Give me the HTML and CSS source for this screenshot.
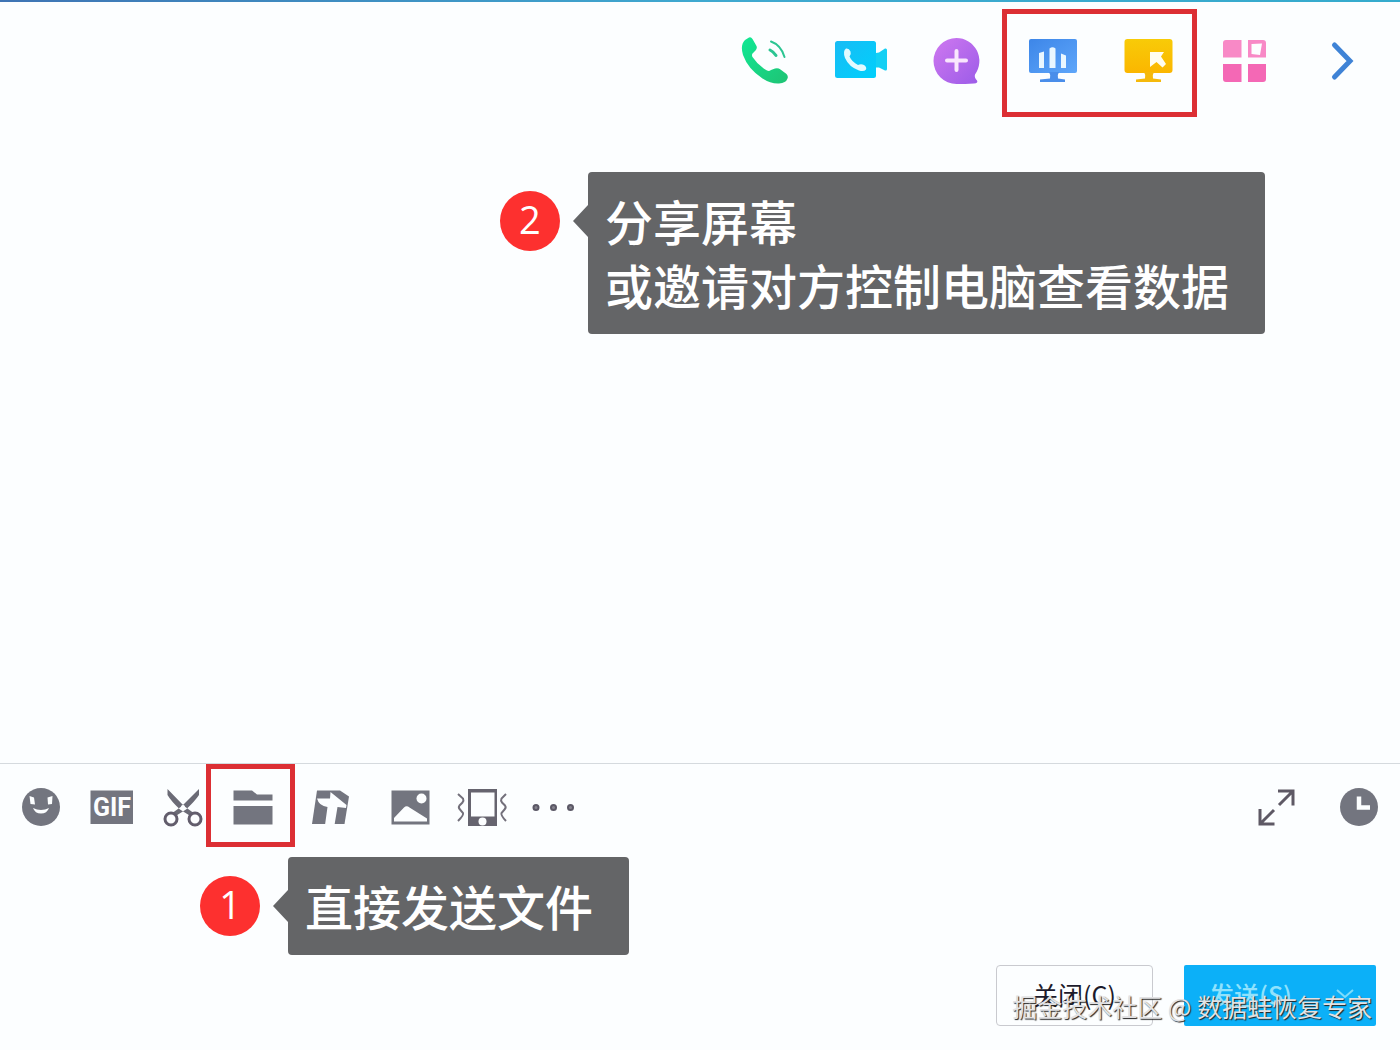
FILE: index.html
```html
<!DOCTYPE html>
<html lang="zh-CN">
<head>
    <meta charset="UTF-8">
    <meta name="viewport" content="width=device-width, initial-scale=1.0">
    <title>聊天窗口</title>
    <link rel="stylesheet" href="styles.css">
</head>
<body>
    <div class="chat">
        <!-- 顶部工具栏 -->
        <header class="topbar">
            <button type="button" class="action" aria-label="语音通话">
                <svg viewBox="0 0 60 60">
                    <defs>
                        <linearGradient id="green" x1="0" y1="0" x2="1" y2="1">
                            <stop offset="0" stop-color="#10e894"/>
                            <stop offset="1" stop-color="#1fc374"/>
                        </linearGradient>
                    </defs>
                    <path fill="url(#green)" d="M14 6.500Q16 5.500 17.500 8L21.500 15Q22.500 17 20.500 19.500L17.500 22.500Q16.500 24 17.500 26Q23 34.500 32 39.500Q34 40.500 36 39L40 37.500Q43 36.500 45.500 38.500L51.500 43Q53.500 45 52.500 47.500Q51 52 44 52.500Q36 53 27.500 47.500Q13 38 8 24Q5 14 10 9Z"/>
                    <path fill="none" stroke="#2cc592" stroke-width="2" stroke-linecap="round" d="M36 10.500Q46 14 49.500 26"/>
                    <path fill="none" stroke="#2cc592" stroke-width="3" stroke-linecap="round" d="M35 19Q39 21 41 24.500"/>
                </svg>
            </button>
            <button type="button" class="action" aria-label="视频通话">
                <svg viewBox="0 0 60 60">
                    <defs>
                        <linearGradient id="cyan" x1="0" y1="0" x2="1" y2="1">
                            <stop offset="0" stop-color="#18bcf5"/>
                            <stop offset="1" stop-color="#00d0fc"/>
                        </linearGradient>
                    </defs>
                    <rect x="4" y="10" width="41" height="37" rx="2.500" fill="url(#cyan)"/>
                    <path fill="#14d0f4" d="M45 22L48 21.500L54 17.500Q56 17 56 19V38Q56 40 54 39.500L48 36.500H45Z"/>
                    <path fill="#e2faff" d="M15 17.500Q18 17 19.500 20.500Q20.500 23 18.500 25.500Q21 31 27 34Q30 32.500 33 34Q36 36 35 38.500Q33 41 28 39.500Q18 36 14 27Q11.500 20 15 17.500Z"/>
                </svg>
            </button>
            <button type="button" class="action" aria-label="发起多人聊天">
                <svg viewBox="0 0 60 60">
                    <defs>
                        <linearGradient id="purple" x1="0" y1="0" x2="1" y2="1">
                            <stop offset="0" stop-color="#cf78f0"/>
                            <stop offset="1" stop-color="#9c5ce8"/>
                        </linearGradient>
                    </defs>
                    <path fill="url(#purple)" d="M29.500 7A23 23 0 0 1 48 43.500Q47 46.500 50 49.500Q51.500 52 47 52.500Q38 53 29.500 53A23 23 0 0 1 29.500 7Z"/>
                    <path stroke="#f9e6fd" stroke-width="4" stroke-linecap="round" d="M29.500 20V39M20 29.500H39"/>
                </svg>
            </button>
            <div class="marked marked-share">
                <button type="button" class="action" aria-label="分享屏幕">
                    <svg viewBox="0 0 60 60">
                        <defs>
                            <linearGradient id="blue" x1="0" y1="0" x2="1" y2="1">
                                <stop offset="0" stop-color="#3d86e8"/>
                                <stop offset="1" stop-color="#5ea6fa"/>
                            </linearGradient>
                        </defs>
                        <rect x="6" y="8" width="48" height="34" rx="2" fill="url(#blue)"/>
                        <path fill="#4a8eea" d="M26 41H36Q34 44 35 47.500L42 48.500V51H17V48.500L27 47.500Q28 44 26 41Z"/>
                        <path fill="#eaf7ff" d="M16 22L21 20.500V37H16ZM26.500 17.500Q29.500 15 32.500 17.500V37H26.500ZM38 22.500L43 24.500V37H38Z"/>
                    </svg>
                </button>
                <button type="button" class="action" aria-label="远程控制">
                    <svg viewBox="0 0 60 60">
                        <defs>
                            <linearGradient id="yellow" x1="0" y1="0" x2="0" y2="1">
                                <stop offset="0" stop-color="#f8cb08"/>
                                <stop offset="1" stop-color="#fbb600"/>
                            </linearGradient>
                        </defs>
                        <rect x="5.500" y="8" width="48" height="34" rx="3" fill="url(#yellow)"/>
                        <path fill="#f5b90c" d="M25 41H35Q33 44 34 47.500L42 48.500V51H17V48.500L26 47.500Q27 44 25 41Z"/>
                        <path fill="#fffdf0" d="M31 21H45L42 25.500L47 33L43.500 36.500L37.500 31L31 36Z"/>
                    </svg>
                </button>
            </div>
            <button type="button" class="action" aria-label="应用">
                <svg viewBox="0 0 60 60">
                    <path fill="#f889c6" d="M11 9H26.500V26.500H8V12Q8 9 11 9Z"/>
                    <path fill="#f889c6" fill-rule="evenodd" d="M33 9H48Q51 9 51 12V26.500H33ZM36.500 13V23L45 24L47 12.500Z"/>
                    <path fill="#f468b5" d="M8 33H26.500V51H11Q8 51 8 48ZM33 33H51V48Q51 51 48 51H33Z"/>
                </svg>
            </button>
            <button type="button" class="action" aria-label="更多">
                <svg viewBox="0 0 60 60">
                    <path fill="none" stroke="#3f83d6" stroke-width="5" stroke-linecap="round" d="M23.500 14L39 30L23.500 46"/>
                </svg>
            </button>
        </header>

        <!-- 消息区 -->
        <main class="messages">
            <div class="callout">
                <span class="badge">2</span>
                <p class="bubble">分享屏幕<br>或邀请对方控制电脑查看数据</p>
            </div>
        </main>

        <!-- 输入区 -->
        <section class="composer">
            <div class="toolbar">
                <button type="button" class="tool" aria-label="表情">
                    <svg viewBox="0 0 60 60">
                        <circle cx="30" cy="30" r="19" fill="#73757f"/>
                        <path fill="#fcfeff" d="M18.500 19L23 20.500L24 27.500L19.500 27ZM36.500 20.500L41.500 19L41 27L37 27.500Z"/>
                        <path fill="#fcfeff" d="M22 31Q30 35 38 31Q36 36.500 30 36.500Q24 36.500 22 31Z"/>
                    </svg>
                </button>
                <button type="button" class="tool" aria-label="GIF">
                    <svg viewBox="0 0 60 60">
                        <rect x="8.500" y="13.500" width="42.500" height="33.500" fill="#73757f"/>
                        <text class="gif-text" x="30" y="39" text-anchor="middle">GIF</text>
                    </svg>
                </button>
                <button type="button" class="tool" aria-label="截图">
                    <svg viewBox="0 0 60 60">
                        <path fill="#6b6b76" d="M14.500 12L31 29L42 37L39 40L27 32.500Q18 24 14.500 18ZM46 12L29 29L18 37L21 40L33 32.500Q42 24 46 18Z"/>
                        <g fill="#fcfeff" stroke="#625d6c" stroke-width="3">
                            <circle cx="18" cy="42" r="6"/>
                            <circle cx="42" cy="42" r="6"/>
                        </g>
                        <circle cx="30" cy="30" r="2" fill="#fcfeff"/>
                    </svg>
                </button>
                <div class="marked marked-file">
                    <button type="button" class="tool" aria-label="发送文件">
                        <svg viewBox="0 0 60 60">
                            <path fill="#73757f" d="M9.500 13.500H28L33 17.500H48.500V23.500H9.500ZM9.500 29H48.500V47.500H9.500Z"/>
                        </svg>
                    </button>
                </div>
                <button type="button" class="tool tool-wide" aria-label="腾讯文档">
                    <svg viewBox="0 0 60 60">
                        <path fill="#73757f" d="M15 13.500H38L47 19.500L42.500 47H10Z"/>
                        <path fill="#fcfeff" d="M28.500 15L44.500 28L44 31L35.500 30L32.500 48H23L25.500 30Q17 29 15 21.500H28Z"/>
                    </svg>
                </button>
                <button type="button" class="tool" aria-label="图片">
                    <svg viewBox="0 0 60 60">
                        <rect x="10.500" y="13.500" width="38" height="34" fill="#73757f"/>
                        <circle cx="40.500" cy="21.500" r="5" fill="#fcfeff"/>
                        <path fill="#fcfeff" d="M13 41L23 30.500Q25.500 28 28.500 30.500L46 41.500V44.500H13Z"/>
                    </svg>
                </button>
                <button type="button" class="tool" aria-label="窗口抖动">
                    <svg viewBox="0 0 60 60">
                        <path fill="#66646f" fill-rule="evenodd" d="M16 12H45V49H16ZM19 15.500V39.500H42.500V15.500Z"/>
                        <circle cx="30.500" cy="44.500" r="4" fill="#fcfeff"/>
                        <path fill="none" stroke="#73707b" stroke-width="2" d="M6 17L11 21.500Q12 23.500 10.500 25.500L7.500 28.500Q6 30.500 8 32.500L11 36Q12 38 6 44M54 17L49.500 21.500Q48.500 23.500 50 25.500L53 28.500Q54.500 30.500 52.500 32.500L49.500 36Q48.500 38 54 44"/>
                    </svg>
                </button>
                <button type="button" class="tool" aria-label="更多工具">
                    <svg viewBox="0 0 60 60">
                        <g fill="#85838e" stroke="#5b5866" stroke-width="2">
                            <circle cx="13" cy="30.500" r="2.500"/>
                            <circle cx="30.500" cy="30.500" r="2.500"/>
                            <circle cx="47.500" cy="30.500" r="2.500"/>
                        </g>
                    </svg>
                </button>
                <div class="toolbar-end">
                    <button type="button" class="tool" aria-label="展开">
                        <svg viewBox="0 0 60 60">
                            <path fill="none" stroke="#5e5965" stroke-width="3" d="M31 14H46V28.500M45.500 14.500L32 28M13 32V47H27.500M13.500 46.500L27 33"/>
                        </svg>
                    </button>
                    <button type="button" class="tool" aria-label="聊天记录">
                        <svg viewBox="0 0 60 60">
                            <circle cx="30" cy="30" r="19" fill="#73757f"/>
                            <path fill="none" stroke="#fcfeff" stroke-width="4.500" d="M30 19.500V30.500H41"/>
                        </svg>
                    </button>
                </div>
            </div>

            <div class="editor">
                <textarea class="input" aria-label="输入消息"></textarea>
                <div class="callout callout-file">
                    <span class="badge">1</span>
                    <p class="bubble">直接发送文件</p>
                </div>
            </div>

            <div class="buttons">
                <button type="button" class="btn btn-close">关闭(C)</button>
                <button type="button" class="btn btn-send">
                    <span>发送(S)</span>
                    <svg class="caret" viewBox="0 0 18 10">
                        <path fill="none" stroke="#7fdcfb" stroke-width="2" d="M1 1L9 8L17 1"/>
                    </svg>
                </button>
                <div class="watermark">掘金技术社区 @ 数据蛙恢复专家</div>
            </div>
        </section>
    </div>
</body>
</html>
```

FILE: styles.css
```css
* {
    box-sizing: border-box;
}
body {
    margin: 0;
    background: #fcfeff;
    font-family: "Noto Sans CJK SC", sans-serif;
}
button {
    padding: 0;
    border: none;
    background: none;
    font-family: inherit;
    cursor: pointer;
}
.chat {
    display: flex;
    flex-direction: column;
    min-height: 100vh;
}

/* 顶部 */
.topbar {
    position: relative;
    display: flex;
    justify-content: flex-end;
    height: 122px;
    padding-right: 11px;
}
.topbar::before {
    content: "";
    position: absolute;
    top: 0;
    left: 0;
    right: 0;
    height: 2px;
    background: linear-gradient(to right, #3f74b4, #3fa9d0 50%, #35abcd);
}
.action {
    display: flex;
    align-items: center;
    justify-content: center;
    width: 96px;
    height: 122px;
}
.action svg,
.tool svg {
    width: 60px;
    height: 60px;
}

/* 红框标注 */
.marked {
    position: relative;
    display: flex;
}
.marked::after {
    content: "";
    position: absolute;
    border: 5px solid #dc2f34;
    pointer-events: none;
}
.marked-share::after {
    inset: 9px 0 5px -3px;
}
.marked-file::after {
    inset: 0 -6px 3px -12px;
}

/* 提示气泡 */
.callout {
    display: flex;
    align-items: flex-start;
    gap: 28px;
}
.badge {
    width: 60px;
    height: 60px;
    margin-top: 19px;
    border-radius: 50%;
    background: #fd302f;
    color: #fff;
    font-family: "Open Sans", sans-serif;
    font-size: 38px;
    line-height: 56px;
    text-align: center;
}
.bubble {
    position: relative;
    margin: 0;
    padding: 16px 36px 18px 17px;
    border-radius: 4px;
    background: #646567;
    color: #fff;
    font-size: 48px;
    font-weight: 500;
    line-height: 64px;
}
.bubble::before {
    content: "";
    position: absolute;
    top: 33px;
    left: -15px;
    border: solid transparent;
    border-width: 16px 15px 16px 0;
    border-right-color: #646567;
}

.messages {
    display: flex;
    flex: 1;
    justify-content: flex-end;
    padding: 50px 135px 50px 20px;
}

/* 输入区 */
.composer {
    border-top: 1px solid #d5dade;
}
.toolbar {
    display: flex;
    height: 86px;
    padding-left: 5px;
}
.tool {
    display: flex;
    align-items: center;
    justify-content: center;
    width: 71px;
    height: 86px;
}
.tool-wide {
    width: 86px;
}
.toolbar-end {
    display: flex;
    margin-left: auto;
}
.toolbar-end .tool {
    width: 82px;
}
.gif-text {
    fill: #fcfeff;
    font-family: "Liberation Sans Narrow", Roboto, sans-serif;
    font-size: 25px;
    font-weight: bold;
}
.editor {
    position: relative;
}
.input {
    display: block;
    width: 100%;
    height: 115px;
    padding: 8px 20px;
    border: none;
    outline: none;
    resize: none;
    background: transparent;
    font-family: inherit;
    font-size: 25px;
}
.callout-file {
    position: absolute;
    top: 7px;
    left: 200px;
}

.buttons {
    position: relative;
    display: flex;
    justify-content: flex-end;
    gap: 31px;
    padding: 0 24px 24px;
}
.btn {
    height: 61px;
    border-radius: 4px;
    font-size: 25px;
    line-height: 32px;
    padding-bottom: 4px;
}
.btn-close {
    width: 157px;
    border: 1px solid #c9cacf;
    color: #1d1b2c;
}
.btn-send {
    display: flex;
    align-items: center;
    justify-content: space-between;
    width: 192px;
    padding: 0 22px 4px 25px;
    border-radius: 2px;
    background: #0cb0f8;
    color: #8fe2fd;
    font-weight: 500;
}
.caret {
    width: 18px;
    height: 10px;
}
.watermark {
    position: absolute;
    right: 28px;
    bottom: 26px;
    color: #e2e2e4;
    font-size: 25px;
    line-height: 36px;
    text-shadow: 1px 1px 1px #222;
    white-space: nowrap;
    pointer-events: none;
}
```
